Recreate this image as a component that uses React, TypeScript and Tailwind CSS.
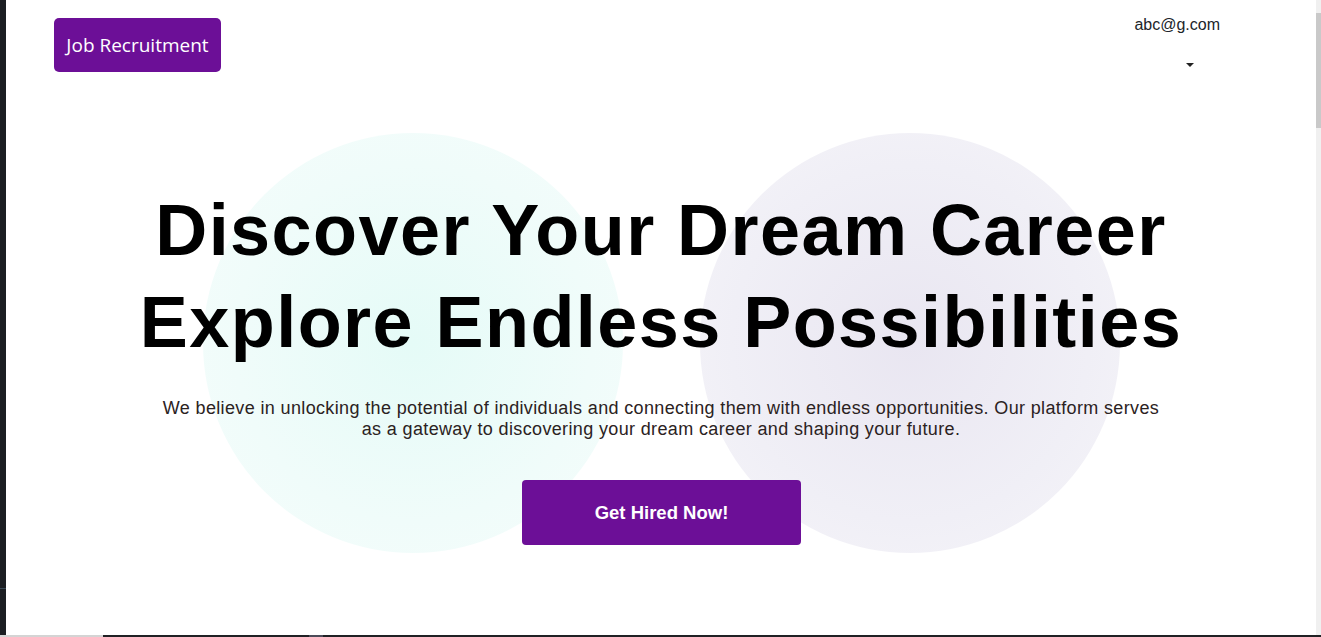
import React from "react";

const NavBar: React.FC = () => {
  return (
    <header className="relative flex items-start justify-between pl-[48px] pr-[96px]">
      <button className="mt-[18px] flex h-[54px] w-[167px] items-center justify-center rounded-[5px] bg-[#6c0f97] text-[19px] text-white [font-family:'Open_Sans',sans-serif]">
        Job Recruitment
      </button>
      <div className="flex flex-col pt-[16px] [font-family:'Liberation_Sans',Arial,sans-serif]">
        <span className="text-[16px] leading-[18px] text-[#212529]">abc@g.com</span>
        {/* dropdown caret */}
        <div className="mt-[29px] pl-[52px]">
          <div className="h-0 w-0 border-x-[4px] border-t-[4px] border-x-transparent border-t-[#222]" />
        </div>
      </div>
    </header>
  );
};

const Hero: React.FC = () => {
  return (
    <section className="relative flex flex-1 flex-col items-center [font-family:'Liberation_Sans',Arial,sans-serif]">
      <div className="flex flex-col items-center pt-[112px]">
        <h1 className="text-center text-[72px] font-bold leading-[92px] tracking-[1.45px] text-black">
          Discover Your Dream Career
          <br />
          Explore Endless Possibilities
        </h1>
        <p className="mt-[30px] w-[1005px] text-center text-[18px] leading-[21px] tracking-[0.36px] text-[#2b2222]">
          We believe in unlocking the potential of individuals and connecting them with endless
          opportunities. Our platform serves as a gateway to discovering your dream career and
          shaping your future.
        </p>
        <button className="ml-[1px] mt-[40px] h-[65px] w-[279px] rounded-[4px] bg-[#6c0f97] text-[18.5px] font-bold text-white">
          Get Hired Now!
        </button>
      </div>
    </section>
  );
};

export default function App() {
  return (
    <div className="flex h-[637px] w-[1321px] flex-col overflow-hidden bg-white">
      <div className="flex min-h-0 flex-1">
        <div className="flex w-[6px] flex-col bg-[#1b1e22]">
          <div className="h-[588px]" />
          <div className="h-[1px] bg-[#3a4a56]" />
        </div>
        <main className="relative isolate flex min-w-0 flex-1 flex-col overflow-hidden bg-white">
          {/* soft background circles behind the hero */}
          <div className="absolute left-[197px] top-[133px] -z-10 h-[420px] w-[420px] rounded-full bg-[radial-gradient(circle,#e5fbf7_0%,#f0fcfa_60%,#f6fdfc_100%)]" />
          <div className="absolute left-[694px] top-[133px] -z-10 h-[420px] w-[420px] rounded-full bg-[radial-gradient(circle,#e9e6f1_0%,#f0eff6_60%,#f6f5f9_100%)]" />
          <NavBar />
          <Hero />
        </main>
        <div className="w-[5px] bg-[#f0f0f0] pt-[13px]">
          <div className="h-[115px] bg-[#c9c9c9]" />
        </div>
      </div>
      <div className="flex h-[2px]">
        <div className="w-[103px] bg-[#d4d4d4]" />
        <div className="w-[206px] bg-[#202124]" />
        <div className="w-[14px] bg-[#4b4b58]" />
        <div className="flex-1 bg-[#202124]" />
      </div>
    </div>
  );
}
